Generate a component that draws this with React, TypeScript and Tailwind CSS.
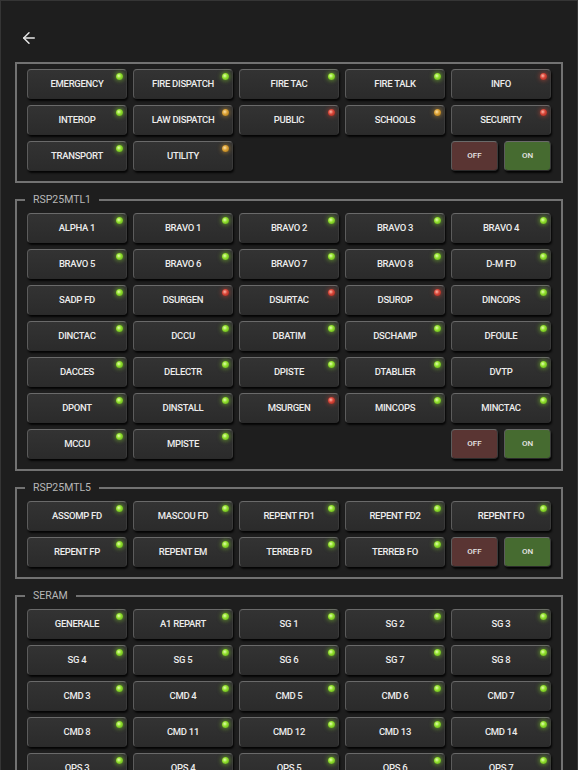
import { ArrowLeft } from "lucide-react";

type Led = "g" | "o" | "r";
type Channel = [string, Led];

type Group = {
  name?: string;
  channels: Channel[];
};

const groups: Group[] = [
  {
    channels: [
      ["EMERGENCY", "g"], ["FIRE DISPATCH", "g"], ["FIRE TAC", "g"], ["FIRE TALK", "g"], ["INFO", "r"],
      ["INTEROP", "g"], ["LAW DISPATCH", "o"], ["PUBLIC", "r"], ["SCHOOLS", "o"], ["SECURITY", "r"],
      ["TRANSPORT", "g"], ["UTILITY", "o"],
    ],
  },
  {
    name: "RSP25MTL1",
    channels: [
      ["ALPHA 1", "g"], ["BRAVO 1", "g"], ["BRAVO 2", "g"], ["BRAVO 3", "g"], ["BRAVO 4", "g"],
      ["BRAVO 5", "g"], ["BRAVO 6", "g"], ["BRAVO 7", "g"], ["BRAVO 8", "g"], ["D-M FD", "g"],
      ["SADP FD", "g"], ["DSURGEN", "r"], ["DSURTAC", "r"], ["DSUROP", "r"], ["DINCOPS", "g"],
      ["DINCTAC", "g"], ["DCCU", "g"], ["DBATIM", "g"], ["DSCHAMP", "g"], ["DFOULE", "g"],
      ["DACCES", "g"], ["DELECTR", "g"], ["DPISTE", "g"], ["DTABLIER", "g"], ["DVTP", "g"],
      ["DPONT", "g"], ["DINSTALL", "g"], ["MSURGEN", "r"], ["MINCOPS", "g"], ["MINCTAC", "g"],
      ["MCCU", "g"], ["MPISTE", "g"],
    ],
  },
  {
    name: "RSP25MTL5",
    channels: [
      ["ASSOMP FD", "g"], ["MASCOU FD", "g"], ["REPENT FD1", "g"], ["REPENT FD2", "g"], ["REPENT FO", "g"],
      ["REPENT FP", "g"], ["REPENT EM", "g"], ["TERREB FD", "g"], ["TERREB FO", "g"],
    ],
  },
  {
    name: "SERAM",
    channels: [
      ["GENERALE", "g"], ["A1 REPART", "g"], ["SG 1", "g"], ["SG 2", "g"], ["SG 3", "g"],
      ["SG 4", "g"], ["SG 5", "g"], ["SG 6", "g"], ["SG 7", "g"], ["SG 8", "g"],
      ["CMD 3", "g"], ["CMD 4", "g"], ["CMD 5", "g"], ["CMD 6", "g"], ["CMD 7", "g"],
      ["CMD 8", "g"], ["CMD 11", "g"], ["CMD 12", "g"], ["CMD 13", "g"], ["CMD 14", "g"],
      ["OPS 3", "g"], ["OPS 4", "g"], ["OPS 5", "g"], ["OPS 6", "g"], ["OPS 7", "g"],
      ["OPS 8", "g"], ["OPS 9", "g"],
    ],
  },
];

const ledClass: Record<Led, string> = {
  g: "bg-[radial-gradient(circle_at_40%_40%,#e4ffb0_0%,#92e02c_40%,#54991a_100%)] shadow-[0_0_4px_1px_rgba(130,210,40,0.55)]",
  o: "bg-[radial-gradient(circle_at_40%_40%,#ffe3a8_0%,#dca236_40%,#9a6a14_100%)] shadow-[0_0_4px_1px_rgba(220,160,50,0.45)]",
  r: "bg-[radial-gradient(circle_at_40%_40%,#ffb8a8_0%,#d9473a_40%,#8e2016_100%)] shadow-[0_0_4px_1px_rgba(220,70,50,0.45)]",
};

const bevel =
  "rounded-[4px] border border-t-[#6a6a6a] border-l-[#5c5c5c] border-r-[#3a3a3a] border-b-[#2a2a2a] shadow-[1px_2px_2px_rgba(0,0,0,0.85)]";

function ChannelButton({ label, led }: { label: string; led: Led }) {
  return (
    <button
      className={`relative h-[30px] w-[100px] bg-gradient-to-b from-[#333333] to-[#2b2b2b] ${bevel} text-[9.5px] font-medium tracking-[-0.3px] text-[#ececec]`}
    >
      {label}
      <span className={`absolute right-[3px] top-[3px] h-[7px] w-[7px] rounded-full ${ledClass[led]}`} />
    </button>
  );
}

function OnOff() {
  return (
    <div className="col-start-5 flex gap-[6px]">
      <button className={`h-[30px] w-[47px] bg-[#5a3533] ${bevel} text-[8px] font-medium text-[#e6e6e6]`}>
        OFF
      </button>
      <button className={`h-[30px] w-[47px] bg-[#466b30] ${bevel} text-[8px] font-medium text-[#e6e6e6]`}>
        ON
      </button>
    </div>
  );
}

function ChannelGroup({ group, first }: { group: Group; first: boolean }) {
  return (
    <fieldset
      className={`border-2 border-[#727272] px-[10px] pb-[10px] ${group.name ? "pt-[6px]" : "pt-[5px]"} ${first ? "" : "mt-[10px]"}`}
    >
      {group.name && (
        <legend className="ml-[-2px] px-[8px] text-[10.5px] leading-[14px] text-[#b8b8b8]">{group.name}</legend>
      )}
      <div className="grid grid-cols-[repeat(5,100px)] gap-[6px]">
        {group.channels.map(([label, led]) => (
          <ChannelButton key={label} label={label} led={led} />
        ))}
        <OnOff />
      </div>
    </fieldset>
  );
}

export default function App() {
  return (
    <div
      className="min-h-screen border border-[#353535] bg-[#1e1e1e] px-[14px] pb-4"
      style={{ fontFamily: "Roboto, 'Liberation Sans', sans-serif" }}
    >
      <div className="h-[61px] pl-[5px] pt-[28px]">
        <ArrowLeft size={18} strokeWidth={2} className="text-[#e6e6e6]" />
      </div>
      {groups.map((g, i) => (
        <ChannelGroup key={i} group={g} first={i === 0} />
      ))}
    </div>
  );
}
